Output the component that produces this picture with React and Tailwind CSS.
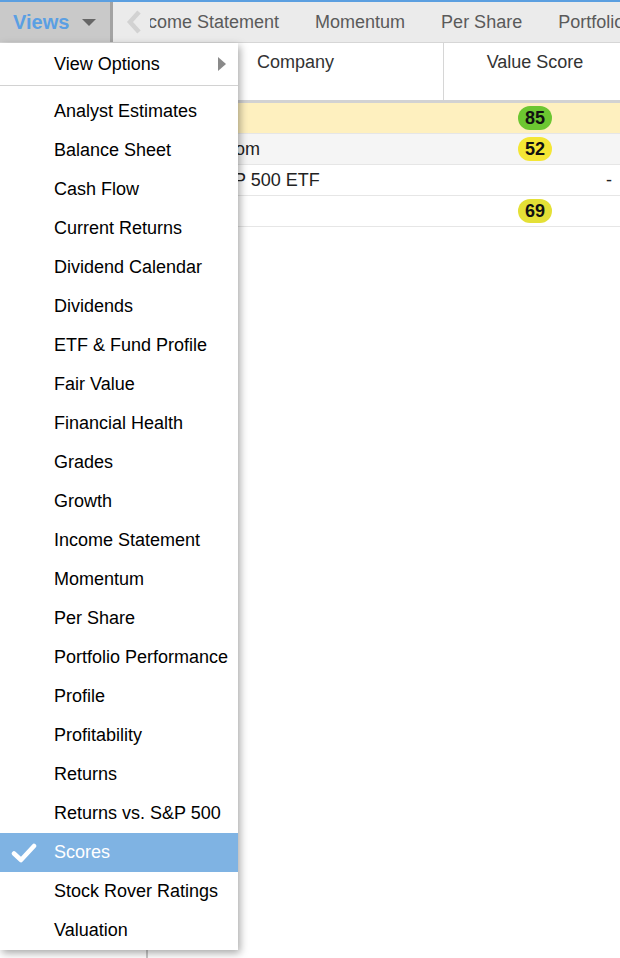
import React from "react";

const views = [
  "Analyst Estimates",
  "Balance Sheet",
  "Cash Flow",
  "Current Returns",
  "Dividend Calendar",
  "Dividends",
  "ETF & Fund Profile",
  "Fair Value",
  "Financial Health",
  "Grades",
  "Growth",
  "Income Statement",
  "Momentum",
  "Per Share",
  "Portfolio Performance",
  "Profile",
  "Profitability",
  "Returns",
  "Returns vs. S&P 500",
  "Scores",
  "Stock Rover Ratings",
  "Valuation",
];

const tabs = ["Income Statement", "Momentum", "Per Share", "Portfolio Performance"];

const rows = [
  { ticker: "AAPL", company: "Apple Inc.", score: 85, badge: "bg-[#6cc631]", bg: "bg-[#fef0bf]" },
  { ticker: "AMZN", company: "Amazon.com", score: 52, badge: "bg-[#f4e635]", bg: "bg-[#f5f5f5]" },
  { ticker: "SPY", company: "SPDR S&P 500 ETF", score: null, bg: "bg-white" },
  { ticker: "", company: "", score: 69, badge: "bg-[#e4e036]", bg: "bg-white" },
];

function Check() {
  return (
    <svg width="26" height="22" viewBox="0 0 26 22">
      <path
        d="M3 11.5 L10 18 L23 4"
        fill="none"
        stroke="white"
        strokeWidth="4.5"
        strokeLinecap="round"
        strokeLinejoin="round"
      />
    </svg>
  );
}

function ViewsMenu() {
  return (
    <div className="absolute left-0 top-[43px] w-[238px] bg-white shadow-[2px_3px_8px_rgba(0,0,0,0.35)]">
      <div className="h-[42px] flex items-center pl-[54px] pr-[12px] justify-between">
        <span>View Options</span>
        <span className="w-0 h-0 border-y-[7px] border-y-transparent border-l-[8px] border-l-[#8a8a8a]" />
      </div>
      <div className="h-px bg-[#d2d2d2]" />
      <div className="pt-[6px]">
        {views.map((v) => {
          const active = v === "Scores";
          return (
            <div
              key={v}
              className={
                "h-[39px] flex items-center relative pl-[54px] whitespace-nowrap " +
                (active ? "bg-[#7fb3e3] text-white" : "text-black")
              }
            >
              {active && (
                <span className="absolute left-[11px] top-[9px]">
                  <Check />
                </span>
              )}
              {v}
            </div>
          );
        })}
      </div>
    </div>
  );
}

export default function App() {
  return (
    <div className="relative w-[620px] h-[958px] overflow-hidden bg-white text-[18px] font-['Liberation_Sans',Arial,sans-serif]">
      {/* toolbar */}
      <div className="h-[43px] border-t-[2px] border-[#5b9fe0] bg-[#ebebeb] border-b border-b-[#d6d6d6] flex">
        <div className="w-[113px] shrink-0 bg-[#c9c9c9] flex items-center pl-[13px] gap-[13px] border-r-[3px] border-r-[#a3a3a3]">
          <span className="font-bold text-[20px] text-[#5a9fe3]">Views</span>
          <span className="w-0 h-0 border-x-[7px] border-x-transparent border-t-[7px] border-t-[#666]" />
        </div>
        <div className="w-[37px] shrink-0 flex items-center pl-[13px]">
          <svg width="16" height="24" viewBox="0 0 16 24">
            <path d="M13 2 L4 12 L13 22" fill="none" stroke="#d2d2d2" strokeWidth="4.5" />
          </svg>
        </div>
        <div className="flex-1 overflow-hidden">
          <div className="flex h-full items-center ml-[-35px] text-[#5a5a5a] whitespace-nowrap">
            {tabs.map((t) => (
              <span key={t} className="px-[18px]">
                {t}
              </span>
            ))}
          </div>
        </div>
      </div>

      {/* grid */}
      <div className="flex h-[915px]">
        <div className="w-[148px] border-r-2 border-r-[#c8c8c8] shrink-0">
          <div className="h-[60px] border-b-[3px] border-b-[#d2d2d2]" />
          {rows.map((r, i) => (
            <div key={i} className={"h-[31px] border-b border-b-[#e6e6e6] pl-3 flex items-center " + r.bg}>
              {r.ticker}
            </div>
          ))}
        </div>
        <div className="flex-1 min-w-0">
          <div className="h-[60px] border-b-[3px] border-b-[#d2d2d2] flex text-[#333]">
            <div className="w-[296px] border-r border-r-[#d6d6d6] text-center pt-[6px] shrink-0">Company</div>
            <div className="w-[182px] text-center pt-[6px] shrink-0">Value Score</div>
          </div>
          {rows.map((r, i) => (
            <div key={i} className={"h-[31px] border-b border-b-[#e6e6e6] flex items-center text-[#222] " + r.bg}>
              <div className="w-[296px] pl-[7px] shrink-0 whitespace-nowrap">{r.company}</div>
              <div className="w-[182px] flex justify-center shrink-0">
                {r.score !== null && (
                  <span className={"w-[34px] h-[24px] rounded-full flex items-center justify-center font-bold text-[#111] " + r.badge}>
                    {r.score}
                  </span>
                )}
              </div>
              {r.score === null && <span className="ml-[-20px]">-</span>}
            </div>
          ))}
        </div>
      </div>

      <ViewsMenu />
    </div>
  );
}
